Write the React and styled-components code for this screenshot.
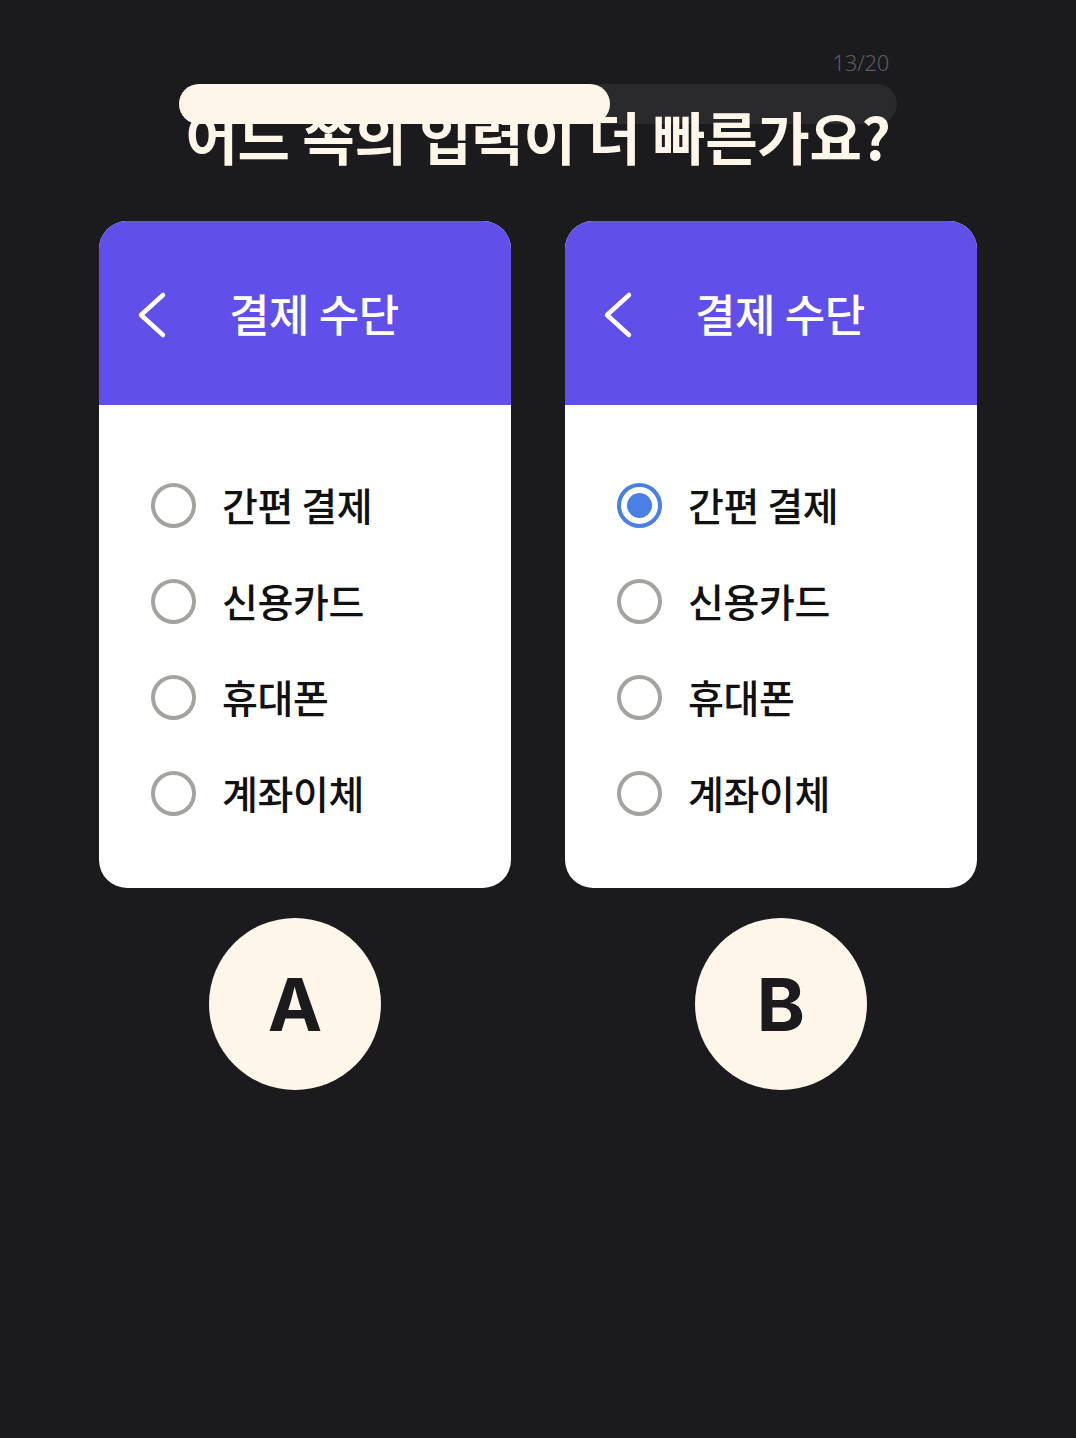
import React from "react";
import styled, { createGlobalStyle } from "styled-components";

const Global = createGlobalStyle`
  html, body { margin: 0; padding: 0; background: #1b1b1e; }
  body { font-family: "Noto Sans CJK KR", "Noto Sans", sans-serif; }
`;

const Page = styled.div`
  width: 1076px;
  min-height: 1438px;
  background: #1b1b1e;
  display: flex;
  flex-direction: column;
  align-items: center;
  box-sizing: border-box;
  padding-top: 48px;
`;

const Top = styled.div`
  width: 718px;
  display: flex;
  flex-direction: column;
`;

const Counter = styled.div`
  align-self: flex-end;
  margin-right: 8px;
  font-family: "Noto Sans", sans-serif;
  font-weight: 300;
  font-size: 22px;
  line-height: 28px;
  color: #5c5c60;
  letter-spacing: -0.3px;
`;

const Track = styled.div`
  margin-top: 8px;
  height: 40px;
  border-radius: 20px;
  background: #2a2a2d;
`;

const Fill = styled.div`
  position: relative;
  z-index: 2;
  height: 100%;
  border-radius: 20px;
  background: #fdf6e9;
`;

const Title = styled.h1`
  position: relative;
  z-index: 1;
  margin: -22px -40px 0;
  text-align: center;
  font-family: "Noto Sans CJK KR", sans-serif;
  font-weight: 600;
  font-size: 57px;
  line-height: 66px;
  letter-spacing: -0.3px;
  color: #fdf6e9;
  white-space: nowrap;
`;

const Cards = styled.div`
  margin-top: 53px;
  display: flex;
  gap: 54px;
`;

const Card = styled.div`
  width: 412px;
  height: 667px;
  border-radius: 28px;
  overflow: hidden;
  background: #ffffff;
  display: flex;
  flex-direction: column;
`;

const Header = styled.div`
  height: 184px;
  background: #604fe8;
  display: flex;
  align-items: center;
  padding-left: 36px;
  gap: 60px;
  box-sizing: border-box;
`;

const HeaderTitle = styled.div`
  color: #ffffff;
  font-size: 44px;
  font-weight: 500;
  letter-spacing: -0.4px;
  line-height: 1;
`;

const Back = styled.svg`
  width: 34px;
  height: 50px;
  margin-top: 4px;
  flex: none;
`;

const List = styled.div`
  padding: 52px 0 0 52px;
  display: flex;
  flex-direction: column;
`;

const Item = styled.div`
  height: 96px;
  display: flex;
  align-items: center;
  gap: 26px;
`;

const Radio = styled.div`
  width: 45px;
  height: 45px;
  box-sizing: border-box;
  border-radius: 50%;
  border: ${(p) => (p.$on ? "4px solid #4a80e6" : "4px solid #a5a39f")};
  display: flex;
  align-items: center;
  justify-content: center;
  flex: none;
`;

const Dot = styled.div`
  width: 25px;
  height: 25px;
  border-radius: 50%;
  background: #4a80e6;
`;

const Label = styled.div`
  font-size: 39px;
  font-weight: 500;
  color: #111111;
  letter-spacing: -0.4px;
  line-height: 1;
  margin-top: -2px;
`;

const Choices = styled.div`
  margin-top: 30px;
  display: flex;
  gap: 314px;
`;

const Choice = styled.div`
  width: 172px;
  height: 172px;
  border-radius: 50%;
  background: #fdf6e9;
  display: flex;
  align-items: center;
  justify-content: center;
  font-family: Inter, "Liberation Sans", sans-serif;
  font-weight: 700;
  font-size: 73px;
  color: #1b1b1e;
  line-height: 1;
`;

const items = ["간편 결제", "신용카드", "휴대폰", "계좌이체"];

function Phone({ selected }) {
  return (
    <Card>
      <Header>
        <Back viewBox="0 0 34 50">
          <path d="M28 5 L6 25 L28 45" fill="none" stroke="#fff" strokeWidth="4.5" strokeLinecap="round" strokeLinejoin="round" />
        </Back>
        <HeaderTitle>결제 수단</HeaderTitle>
      </Header>
      <List>
        {items.map((t, i) => (
          <Item key={t}>
            <Radio $on={selected === i}>{selected === i && <Dot />}</Radio>
            <Label>{t}</Label>
          </Item>
        ))}
      </List>
    </Card>
  );
}

export default function App() {
  const progress = 431 / 718;
  return (
    <>
      <Global />
      <Page>
        <Top>
          <Counter>13/20</Counter>
          <Track>
            <Fill style={{ width: `${progress * 100}%` }} />
          </Track>
          <Title>어느 쪽의 입력이 더 빠른가요?</Title>
        </Top>
        <Cards>
          <Phone selected={-1} />
          <Phone selected={0} />
        </Cards>
        <Choices>
          <Choice>A</Choice>
          <Choice>B</Choice>
        </Choices>
      </Page>
    </>
  );
}
